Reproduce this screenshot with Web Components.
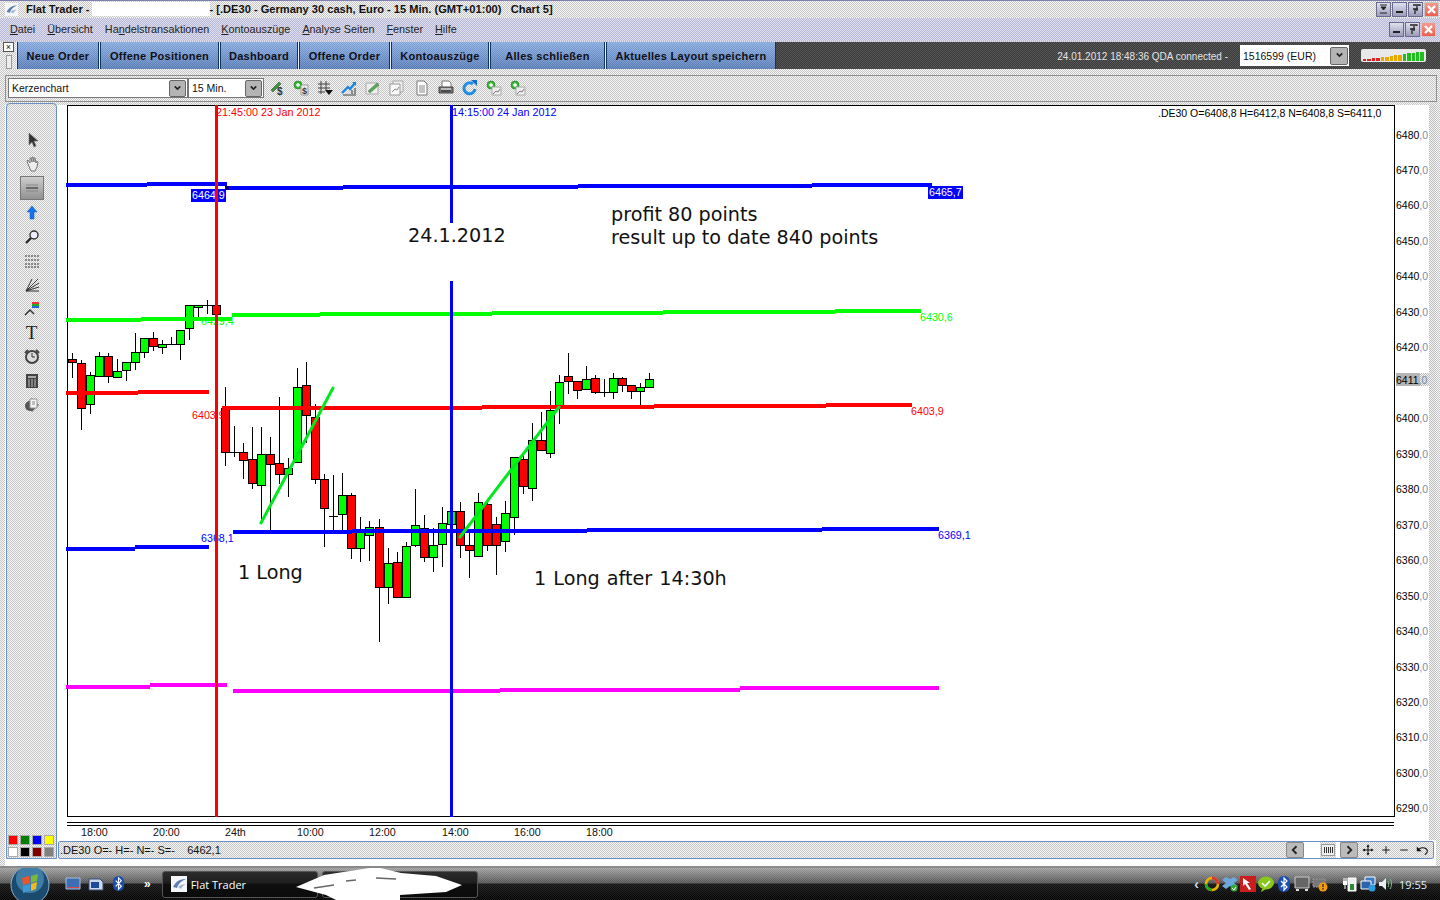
<!DOCTYPE html>
<html>
<head>
<meta charset="utf-8">
<title>Flat Trader</title>
<style>
  html, body { margin: 0; padding: 0; overflow: hidden; background: #fff; }
</style>
</head>
<body>
<app-shell>
  <title-bar></title-bar>
  <menu-bar></menu-bar>
  <tab-bar>
    <tab-button style="width:82px">Neue Order</tab-button>
    <tab-button style="width:119px">Offene Positionen</tab-button>
    <tab-button style="width:78px">Dashboard</tab-button>
    <tab-button style="width:91px">Offene Order</tab-button>
    <tab-button style="width:98px">Kontoauszüge</tab-button>
    <tab-button style="width:115px">Alles schließen</tab-button>
    <tab-button style="width:170px">Aktuelles Layout speichern</tab-button>
  </tab-bar>
  <chart-toolbar></chart-toolbar>
  <main-area>
    <tool-rail></tool-rail>
    <chart-column>
      <candle-chart></candle-chart>
      <status-strip></status-strip>
    </chart-column>
  </main-area>
  <task-bar></task-bar>
</app-shell>

<script>
/**
 * Flat Trader chart window, built from small custom elements.
 */
const DITHER_GREY = 'repeating-conic-gradient(#c6c6c6 0 25%, #f6f6f6 0 50%) 0 0 / 2px 2px'
const DITHER_LILAC = 'repeating-conic-gradient(#b9b9d8 0 25%, #dcdcec 0 50%) 0 0 / 2px 2px'

/**
 * Icon drawings, all on a 16x16 grid.
 */
const ICONS = {
  cursor: '<path d="M5 1v12l3-3 2 5 2-1-2-5h4z" fill="#333" stroke="#777" stroke-width=".6"/>',
  hand: '<path d="M4 8 3 5l1-1 2 3V2h1l1 4V1h1l1 5V2h1l1 5 1-2 1 1-1 5-2 4H7z" fill="#eee" stroke="#777"/>',
  line: '<path d="M2 8h12" stroke="#222"/><path d="M2 5h12M2 11h12" stroke="#888"/>',
  up: '<path d="M8 1 3 7h3v7h4V7h3z" fill="#1874ea" stroke="#0c56c0" stroke-width=".5"/>',
  zoom: '<circle cx="10" cy="6" r="4" fill="#eef" stroke="#333" stroke-width="1.4"/><path d="M7 9l-5 5" stroke="#222" stroke-width="2.2"/>',
  dashes: '<path d="M1 3h14M1 7h14M1 11h14M1 14h14" stroke="#333" stroke-dasharray="2 1"/>',
  fan: '<path d="M2 14 14 2M2 14 15 6M2 14 15 10M2 14h13M2 14 8 2" stroke="#333"/>',
  multi: '<path d="M8 1h7v2H8z" fill="#e33"/><path d="M8 3h7v2H8z" fill="#2a2"/><path d="M8 5h7v2H8z" fill="#26d"/><path d="M1 14l5-5 4 4" fill="none" stroke="#333" stroke-width="1.5"/>',
  clock: '<circle cx="8" cy="8" r="6" fill="#ddd" stroke="#444" stroke-width="2"/><path d="M8 4v4h3" fill="none" stroke="#333"/><path d="M1 4l3-3M15 4l-3-3" stroke="#444" stroke-width="2"/>',
  calc: '<path d="M2 1h12v14H2z" fill="#444"/><path d="M4 3h8v2H4z" fill="#aaa"/><path d="M4 7h8M4 9h8M4 11h8M4 13h8" stroke="#bbb" stroke-dasharray="2 1"/>',
  print: '<path d="M4 1h7l2 2v5H4z" fill="#fff" stroke="#777"/><path d="M1 7h14v6H1z" fill="#777" stroke="#444"/><path d="M3 9h10" stroke="#fff"/><path d="M3 11h10" stroke="#222"/>',
  orbdoc: '<path d="M8 1l7 7-7 7-7-7z" fill="#777"/><circle cx="6" cy="9" r="5" fill="#555"/><path d="M6 2h7v9H6z" fill="#f2f2f2" stroke="#999"/><path d="M8 5h3M8 7h3" stroke="#888"/>',
  pencilbuck: '<path d="M2 10 10 2l2 2-8 8z" fill="#3a9a3a" stroke="#444" stroke-width=".6"/><text x="8" y="15" font-size="10" font-family="Liberation Sans" font-weight="bold" fill="#333">$</text>',
  plusbuck: '<circle cx="5" cy="5" r="4" fill="#2fb52f" stroke="#197a19" stroke-width=".6"/><path d="M5 3v4M3 5h4" stroke="#fff" stroke-width="1.4"/><path d="M8 5h7v10H8z" fill="#eee" stroke="#999"/><text x="9" y="14" font-size="9" font-family="Liberation Sans" font-weight="bold" fill="#333">$</text>',
  grid: '<path d="M1 4h12M1 8h12M1 12h7M4 1v13M9 1v9" stroke="#444"/><path d="M8 10h8l-4 5z" fill="#111"/>',
  trend: '<path d="M1 13 7 7l2 2 5-6" fill="none" stroke="#1c84dc" stroke-width="2.2"/><path d="M11 2h4v4z" fill="#1c84dc"/><path d="M2 15h13" stroke="#777" stroke-width="1.5"/><path d="M11 10v4M14 8v6" stroke="#888" stroke-width="2"/>',
  pencheck: '<path d="M1 3h12v11H1z" fill="#eee" stroke="#aaa"/><path d="M3 11 12 3l2 2-9 8z" fill="#4cae4c" stroke="#666" stroke-width=".5"/>',
  chartdoc: '<path d="M4 1h10v11H4z" fill="#eee" stroke="#aaa"/><path d="M1 4h10v11H1z" fill="#fafafa" stroke="#999"/><path d="M3 12l3-3 2 1 2-3" fill="none" stroke="#888"/>',
  doc: '<path d="M3 1h7l3 3v11H3z" fill="#fff" stroke="#777"/><path d="M5 6h6M5 8h6M5 10h6M5 12h6" stroke="#888"/>',
  refresh: '<path d="M13 9a5.5 5.5 0 1 1-2-5" fill="none" stroke="#1e8ee8" stroke-width="3"/><path d="M9 0h6v6z" fill="#1468c8"/>',
  pluschart: '<circle cx="5" cy="5" r="4" fill="#3bb43b" stroke="#197a19" stroke-width=".6"/><path d="M5 3v4M3 5h4" stroke="#fff" stroke-width="1.3"/><path d="M6 7h9v8H6z" fill="#eee" stroke="#aaa"/><path d="M7 14l3-3 2 1 2-3" fill="none" stroke="#777"/>',
  chevron: '<path d="M4 5l4 4 4-4" fill="none" stroke="#222" stroke-width="2.4"/>',
  left: '<path d="M10 3 5 8l5 5" fill="none" stroke="#222" stroke-width="2.4"/>',
  right: '<path d="M6 3l5 5-5 5" fill="none" stroke="#222" stroke-width="2.4"/>',
  bars: '<path d="M1.5 2.5h13v11h-13z" fill="#eee" stroke="#999"/><path d="M4.5 5v6M6.5 5v6M8.5 5v6M10.5 5v6M12.5 5v6" stroke="#333"/>',
  move: '<path d="M8 1v14M1 8h14" stroke="#111" stroke-width="1.4"/><path d="M8 1l-2 3h4zM8 15l-2-3h4zM1 8l3-2v4zM15 8l-3-2v4z" fill="#111"/>',
  plus: '<path d="M8 3v10M3 8h10" stroke="#111" stroke-width="1.3"/>',
  minus: '<path d="M3 8h10" stroke="#111" stroke-width="1.3"/>',
  undo: '<path d="M1 3v6h6z" fill="#111"/><path d="M4 6c4-3 10-1 10 3 0 2-2 3-3 4" fill="none" stroke="#111" stroke-width="1.3"/>',
  swoosh: '<path d="M0 0h16v16H0z" fill="#f4f6fa"/><path d="M2 11C5 5 9 3 15 3 10 5 7 8 6 12z" fill="#5b80b0"/><path d="M7 11c2-2 5-3 8-3-3 1-4 3-5 5z" fill="#9db4d2"/>',
  gear: '<path d="M1 3h11l3 3v8H1z" fill="#cfd8ea" stroke="#34507f"/><path d="M3 6h8v6H3z" fill="#1d4d9a"/>',
  desktop: '<path d="M1 2h14v11H1z" fill="#3d6db3" stroke="#a9c0dc"/><path d="M2 11h12v1H2z" fill="#d44"/>',
  bluetooth: '<path d="M8 0c5 0 6 4 6 8s-1 8-6 8-6-4-6-8 1-8 6-8z" fill="#1a4fb0"/><path d="M5 5l6 6-3 3V2l3 3-6 6" fill="none" stroke="#fff" stroke-width="1.2"/>',
  ring: '<circle cx="8" cy="8" r="6" fill="none" stroke="#e8b400" stroke-width="2.6"/><path d="M8 2a6 6 0 0 1 6 6" fill="none" stroke="#d33" stroke-width="2.6"/><path d="M2 8a6 6 0 0 0 6 6" fill="none" stroke="#2a2" stroke-width="2.6"/>',
  box: '<path d="M8 3l-4-2-4 3 4 3-4 3 4 3 4-3 4 3 4-3-4-3 4-3-4-3z" fill="#6ca8dc"/><circle cx="12" cy="12" r="3.5" fill="#3a3"/><path d="M10 12l2 2 2-3" fill="none" stroke="#fff"/>',
  redapp: '<path d="M0 0h16v16H0z" fill="#c81e1e"/><path d="M3 2v8l2-2 4 6 2-1-4-6h3z" fill="#fff"/>',
  bubble: '<ellipse cx="8" cy="7" rx="8" ry="6.5" fill="#88c81e"/><path d="M4 13l-1 3 5-3z" fill="#88c81e"/><path d="M4 7l3 3 5-5" fill="none" stroke="#fff" stroke-width="1.6"/>',
  monitor: '<path d="M1 1h14v11H1z" fill="#666" stroke="#ccc"/><path d="M2 13h3v2H2zM11 13h3v2h-3z" fill="#ddd"/>',
  warn: '<path d="M1 3h12v8H1z" fill="#777" stroke="#999" stroke-dasharray="2 1"/><circle cx="11" cy="11" r="4.5" fill="#f29a11"/><path d="M11 8v3M11 12v1.4" stroke="#222" stroke-width="1.2"/>',
  power: '<path d="M6 2h8v13H6z" fill="#eee" stroke="#fff"/><path d="M8 8h4v6H8z" fill="#2a8a3a"/><path d="M1 5h4v4H1z" fill="#fff"/><path d="M2 2v3M4 2v3M3 9v4" stroke="#fff"/>',
  network: '<path d="M5 1h10v8H5z" fill="#3c7ac8" stroke="#fff"/><path d="M1 5h10v8H1z" fill="#2d62ad" stroke="#fff"/><circle cx="12" cy="12" r="3.5" fill="#2aa0e0"/>',
  sound: '<path d="M1 6h3l4-4v12l-4-4H1z" fill="#e8eef6"/><path d="M10 5c1 2 1 4 0 6M12 3c2 3 2 7 0 10" fill="none" stroke="#7cc88a"/>'
}

/**
 * Registers a custom element whose shadow root holds the given markup.
 *
 * @param {string} name - The tag name.
 * @param {string} html - Shadow markup with its style.
 * @param {Function} [ready] - Called with the element after it is built.
 */
function defineElement (name, html, ready) {
  const template = document.createElement('template')
  template.innerHTML = html
  customElements.define(name, class extends HTMLElement {
    constructor () {
      super()
      this.attachShadow({ mode: 'open' }).appendChild(template.content.cloneNode(true))
      if (ready) ready(this)
    }
  })
}

// One inline svg icon, the name decides the drawing.
customElements.define('px-icon', class extends HTMLElement {
  constructor () {
    super()
    const size = this.getAttribute('size') || 16
    this.attachShadow({ mode: 'open' }).innerHTML = `
      <style>:host { display: block; width: ${size}px; height: ${size}px; } svg { display: block; }</style>
      <svg width="${size}" height="${size}" viewBox="0 0 16 16">${ICONS[this.getAttribute('name')] || ''}</svg>`
  }
})

defineElement('app-shell', `
  <style>
    :host {
      display: flex;
      flex-direction: column;
      width: 1440px;
      height: 900px;
      overflow: hidden;
      font-family: "Liberation Sans", Arial, sans-serif;
      font-size: 11px;
      color: #111;
    }
  </style>
  <slot></slot>`)

// Square caption button, the top two rows carry three or four of them.
defineElement('window-button', `
  <style>
    :host {
      display: flex;
      align-items: center;
      justify-content: center;
      width: 13px;
      height: 13px;
      border: 1px solid #6a6a8c;
      background: linear-gradient(#dfe0ee, #9c9cba);
      color: #222;
      box-sizing: content-box;
    }
    :host([kind="close"]) { background: linear-gradient(#f49a90, #ee5d50); border-color: #c9c9c9; }
    svg { display: block; }
  </style>
  <svg width="11" height="11" viewBox="0 0 11 11"></svg>`, el => {
  const marks = {
    down: '<path d="M2 1h7M2 9h7M3 3l2.5 3L8 3z" stroke="#222" fill="#222"/>',
    min: '<path d="M2 8h7" stroke="#222" stroke-width="2"/>',
    restore: '<path d="M3 1h7v1M7 2v5M3 5h5M5 5v5" stroke="#222" fill="none" stroke-width="1.3"/>',
    close: '<path d="M2 2l7 7M9 2l-7 7" stroke="#fff" stroke-width="2.4"/>'
  }
  el.shadowRoot.querySelector('svg').innerHTML = marks[el.getAttribute('kind')]
})

defineElement('title-bar', `
  <style>
    :host {
      display: flex;
      align-items: center;
      height: 17px;
      border-top: 1px solid #8080b0;
      background: ${DITHER_GREY};
      font-weight: bold;
      font-size: 11.1px;
      white-space: nowrap;
    }
    .logo { margin-left: 5px; }
    .name { margin-left: 8px; }
    .hidden { width: 118px; height: 14px; margin-left: 2px; background: #fff; }
    .doc { white-space: pre; }
    .controls { display: flex; gap: 1px; margin-left: auto; margin-right: 1px; }
  </style>
  <px-icon class="logo" name="swoosh" size="13"></px-icon>
  <span class="name">Flat Trader -</span>
  <span class="hidden"></span>
  <span class="doc">- [.DE30 - Germany 30 cash, Euro - 15 Min. (GMT+01:00)   Chart 5]</span>
  <span class="controls">
    <window-button kind="down"></window-button>
    <window-button kind="min"></window-button>
    <window-button kind="restore"></window-button>
    <window-button kind="close"></window-button>
  </span>`)

defineElement('menu-bar', `
  <style>
    :host {
      display: flex;
      align-items: center;
      gap: 12px;
      height: 23px;
      padding-left: 10px;
      background: ${DITHER_LILAC};
      font-size: 10.8px;
      color: #222;
    }
    .controls { display: flex; gap: 1px; margin-left: auto; margin-right: 4px; }
  </style>
  <span><u>D</u>atei</span>
  <span><u>Ü</u>bersicht</span>
  <span>Ha<u>n</u>delstransaktionen</span>
  <span><u>K</u>ontoauszüge</span>
  <span><u>A</u>nalyse Seiten</span>
  <span><u>F</u>enster</span>
  <span><u>H</u>ilfe</span>
  <span class="controls">
    <window-button kind="min"></window-button>
    <window-button kind="restore"></window-button>
    <window-button kind="close"></window-button>
  </span>`)

defineElement('tab-button', `
  <style>
    :host {
      display: flex;
      align-items: center;
      justify-content: center;
      box-sizing: border-box;
      height: 27px;
      border-left: 1px solid #0f3560;
      border-right: 1px solid #0f3560;
      box-shadow: -1px 0 0 #e8eef8;
      background: repeating-conic-gradient(rgba(255,255,255,.12) 0 25%, rgba(0,0,0,.08) 0 50%) 0 0 / 2px 2px,
        linear-gradient(#8db1e8, #5e83bf);
      font-weight: bold;
      font-size: 11px;
      letter-spacing: .3px;
      color: #101018;
      white-space: nowrap;
    }
  </style>
  <slot></slot>`)

defineElement('tab-bar', `
  <style>
    :host {
      display: flex;
      align-items: flex-end;
      height: 29px;
      background: ${DITHER_LILAC};
    }
    .grip {
      display: flex;
      flex-direction: column;
      align-items: center;
      gap: 3px;
      width: 17px;
      height: 27px;
      box-sizing: border-box;
      background: ${DITHER_GREY};
    }
    .x {
      width: 9px;
      height: 9px;
      border: 1px solid #555;
      background: #fff;
      font-size: 9px;
      line-height: 8px;
      text-align: center;
    }
    .lines { width: 4px; height: 14px; border: 1px solid #999; background: #eee; }
    .tabs { display: flex; gap: 1px; }
    .info {
      display: flex;
      flex: 1;
      align-items: center;
      height: 27px;
      background: repeating-conic-gradient(#3c3c3c 0 25%, #565656 0 50%) 0 0 / 2px 2px;
    }
    .clock { margin-left: auto; padding-top: 1px; font-size: 10px; color: #e4e4e4; white-space: nowrap; }
    .account {
      display: flex;
      align-items: center;
      justify-content: space-between;
      box-sizing: border-box;
      width: 109px;
      height: 21px;
      margin-left: 12px;
      padding: 0 1px 0 3px;
      background: #fff;
      font-size: 10.5px;
    }
    .drop {
      display: flex;
      align-items: center;
      justify-content: center;
      width: 16px;
      height: 16px;
      border: 1px solid #666;
      border-radius: 2px;
      background: #b4b4b4;
    }
    .meter {
      display: flex;
      align-items: flex-end;
      gap: 1px;
      box-sizing: border-box;
      width: 65px;
      height: 13px;
      margin: 0 14px 0 12px;
      padding: 1px 2px;
      border-radius: 2px;
      background: #e9e9e9;
    }
    .meter i { display: block; width: 4px; }
  </style>
  <div class="grip"><div class="x">×</div><div class="lines"></div></div>
  <div class="tabs"><slot></slot></div>
  <div class="info">
    <span class="clock">24.01.2012 18:48:36 QDA connected -</span>
    <span class="account">1516599 (EUR)<span class="drop"><px-icon name="chevron" size="11"></px-icon></span></span>
    <span class="meter"></span>
  </div>`, el => {
  const heights = [2, 2, 3, 3, 4, 4, 5, 6, 6, 7, 8, 8, 9, 9]
  const colors = ['#d22', '#d22', '#d22', '#d22', '#e8a800', '#e8a800', '#e8a800', '#e8a800', '#e8a800', '#1fbf1f', '#1fbf1f', '#1fbf1f', '#1fbf1f', '#1fbf1f']
  el.shadowRoot.querySelector('.meter').innerHTML = heights.map((h, i) =>
    `<i style="height:${h}px;background:${colors[i]}"></i>`).join('')
})

defineElement('chart-toolbar', `
  <style>
    :host {
      display: block;
      box-sizing: border-box;
      height: 36px;
      padding: 6px 3px 0 5px;
      background: ${DITHER_GREY};
    }
    .band {
      display: flex;
      align-items: center;
      box-sizing: border-box;
      height: 27px;
      padding: 0 0 1px 2px;
      border: 1px solid #909090;
    }
    .select {
      display: flex;
      align-items: center;
      justify-content: space-between;
      box-sizing: border-box;
      height: 20px;
      padding: 0 1px 0 3px;
      border: 1px solid #777;
      background: #fff;
      font-size: 10.5px;
    }
    .drop {
      display: flex;
      align-items: center;
      justify-content: center;
      width: 15px;
      height: 15px;
      border: 1px solid #666;
      border-radius: 2px;
      background: #b4b4b4;
    }
    .icons { display: flex; gap: 8.1px; margin-left: 5px; }
  </style>
  <div class="band">
    <span class="select" style="width:180px">Kerzenchart<span class="drop"><px-icon name="chevron" size="11"></px-icon></span></span>
    <span class="select" style="width:76px">15 Min.<span class="drop"><px-icon name="chevron" size="11"></px-icon></span></span>
    <span class="icons">
      <px-icon name="pencilbuck"></px-icon><px-icon name="plusbuck"></px-icon><px-icon name="grid"></px-icon>
      <px-icon name="trend"></px-icon><px-icon name="pencheck"></px-icon><px-icon name="chartdoc"></px-icon>
      <px-icon name="doc"></px-icon><px-icon name="print"></px-icon><px-icon name="refresh"></px-icon>
      <px-icon name="pluschart"></px-icon><px-icon name="pluschart"></px-icon>
    </span>
  </div>`)

defineElement('main-area', `
  <style>
    :host {
      display: flex;
      height: 763px;
      box-sizing: border-box;
      padding: 0 4px 7px 5px;
      background: linear-gradient(#fff, #fff) 5px 0 / calc(100% - 9px) 100% no-repeat, ${DITHER_GREY};
      border-bottom: 2px solid #8a8a8a;
    }
  </style>
  <slot></slot>`)

defineElement('tool-rail', `
  <style>
    :host {
      display: flex;
      flex-direction: column;
      align-items: center;
      flex: none;
      box-sizing: border-box;
      width: 51px;
      margin: -2px 0 0 1px;
      padding-top: 24px;
      border: 1px solid #6a90c4;
      border-radius: 4px 4px 0 0;
      background: ${DITHER_GREY};
    }
    .slot {
      display: flex;
      align-items: center;
      justify-content: center;
      width: 24px;
      height: 24px;
      font-family: "Liberation Serif", serif;
      font-size: 19px;
      line-height: 24px;
      color: #222;
    }
    .on { background: linear-gradient(#cfcfcf, #8f8f8f); outline: 1px solid #777; outline-offset: -1px; }
    .swatches {
      display: grid;
      grid-template-columns: repeat(4, 10px);
      grid-auto-rows: 10px;
      gap: 2px;
      margin: auto 2px 0 0;
      padding-bottom: 1px;
    }
    .swatches i { display: block; border: 1px solid #aaa; box-sizing: border-box; }
  </style>
  <div class="slot"><px-icon name="cursor"></px-icon></div>
  <div class="slot"><px-icon name="hand"></px-icon></div>
  <div class="slot on"><px-icon name="line"></px-icon></div>
  <div class="slot" style="margin-top:1px"><px-icon name="up"></px-icon></div>
  <div class="slot"><px-icon name="zoom"></px-icon></div>
  <div class="slot"><px-icon name="dashes"></px-icon></div>
  <div class="slot"><px-icon name="fan"></px-icon></div>
  <div class="slot"><px-icon name="multi"></px-icon></div>
  <div class="slot">T</div>
  <div class="slot"><px-icon name="clock"></px-icon></div>
  <div class="slot"><px-icon name="calc"></px-icon></div>
  <div class="slot"><px-icon name="orbdoc"></px-icon></div>
  <div class="swatches">
    <i style="background:#f00"></i><i style="background:#008000"></i><i style="background:#00f"></i><i style="background:#ff0"></i>
    <i style="background:#fff"></i><i style="background:#000"></i><i style="background:#800000"></i><i style="background:#808080"></i>
  </div>`)

defineElement('chart-column', `
  <style>
    :host { display: flex; flex-direction: column; flex: 1; min-width: 0; }
  </style>
  <slot></slot>`)

/**
 * The candles, read off the reference: body top, body bottom, wick top, wick bottom, colour.
 * Values are thirds of a pixel counted from y = 290. Colour d is a flat candle.
 */
const CANDLES = [
  [208, 217, 190, 263, 'r'], [220, 355, 210, 420, 'r'], [256, 343, 247, 372, 'g'], [199, 257, 186, 260, 'g'],
  [199, 259, 190, 278, 'r'], [244, 260, 208, 260, 'g'], [217, 241, 217, 273, 'g'], [187, 217, 129, 240, 'g'],
  [145, 187, 145, 203, 'g'], [145, 169, 126, 183, 'r'], [163, 172, 150, 192, 'g'], [163, 163, 141, 163, 'd'],
  [121, 163, 121, 210, 'g'], [46, 115, 46, 150, 'g'], [46, 52, 46, 82, 'g'], [44, 44, 30, 72, 'd'],
  [46, 73, 46, 73, 'r'], [355, 487, 292, 527, 'r'], [485, 485, 408, 500, 'd'], [487, 511, 460, 566, 'r'],
  [508, 580, 412, 596, 'r'], [493, 586, 412, 690, 'g'], [493, 523, 441, 733, 'r'], [520, 553, 322, 583, 'r'],
  [535, 553, 505, 620, 'g'], [292, 517, 235, 517, 'g'], [286, 376, 217, 460, 'r'], [382, 568, 343, 583, 'r'],
  [568, 655, 553, 770, 'r'], [677, 677, 555, 720, 'd'], [616, 673, 550, 720, 'g'], [616, 775, 610, 808, 'r'],
  [722, 775, 682, 815, 'g'], [712, 735, 692, 813, 'g'], [712, 892, 688, 1055, 'r'], [820, 892, 775, 942, 'g'],
  [817, 922, 787, 922, 'r'], [769, 922, 755, 925, 'g'], [706, 766, 598, 772, 'g'], [715, 802, 676, 815, 'r'],
  [766, 802, 715, 845, 'g'], [700, 763, 652, 830, 'g'], [664, 703, 650, 760, 'g'], [664, 766, 637, 804, 'r'],
  [766, 781, 730, 863, 'r'], [637, 799, 610, 802, 'g'], [643, 766, 630, 782, 'r'], [703, 766, 680, 856, 'r'],
  [670, 754, 634, 786, 'g'], [502, 682, 502, 736, 'g'], [508, 588, 490, 612, 'r'], [451, 595, 400, 632, 'g'],
  [451, 481, 366, 481, 'r'], [361, 490, 303, 503, 'g'], [277, 346, 256, 403, 'g'], [259, 274, 190, 312, 'r'],
  [274, 301, 274, 328, 'r'], [268, 298, 229, 298, 'g'], [265, 307, 256, 313, 'r'], [307, 307, 268, 322, 'd'],
  [265, 307, 250, 326, 'g'], [265, 286, 262, 307, 'r'], [286, 304, 286, 326, 'r'], [292, 304, 280, 344, 'g'],
  [268, 292, 250, 292, 'g']
]

// Hand-drawn level lines: x from, x to, y.
const LEVELS = {
  '#0000ff': [[66, 147, 185], [147, 227, 184], [228, 343, 188], [343, 578, 187], [578, 812, 186], [812, 932, 185],
    [66, 135, 549], [135, 209, 547], [233, 352, 532], [352, 587, 531], [587, 822, 530], [822, 939, 529]],
  '#00ff00': [[66, 141, 320], [141, 232, 319], [232, 320, 315], [320, 492, 314], [492, 663, 313], [663, 835, 312], [835, 921, 311]],
  '#ff0000': [[66, 138, 393], [138, 209, 392], [222, 482, 408], [482, 654, 407], [654, 826, 406], [826, 912, 405]],
  '#ff00ff': [[66, 150, 687], [150, 227, 685], [233, 500, 691], [500, 740, 690], [740, 939, 688]]
}

// Vertical middle of every price label, 6410,0 sits hidden under the current price.
const PRICE_ROWS = [135, 170, 205, 241, 276, 312, 347, null, 418, 454, 489, 525, 560, 596, 631, 667, 702, 737, 773, 808]

const chartFont = '"Liberation Sans", Arial, sans-serif'

/**
 * Builds the svg content of the chart. Coordinates are those of the page.
 *
 * @returns {string} The svg markup.
 */
function chartMarkup () {
  let out = ''
  const text = (x, y, s, fill, extra = '') => `<text x="${x}" y="${y}" fill="${fill}" ${extra}>${s}</text>`

  // Frame and the free column right of the price axis.
  out += '<rect x="1429" y="105" width="7" height="735" fill="url(#dither)"/>'
  out += '<rect x="67.5" y="105.5" width="1327" height="711" fill="#fff" stroke="#000"/>'
  out += '<path d="M67 822.5h1327M67 825.5h1327" stroke="#000" fill="none"/>'

  // Candles.
  CANDLES.forEach((c, i) => {
    const cx = Math.round(72 + 9.015 * i) + 0.5
    const y = v => Math.round(290 + v / 3)
    out += `<path d="M${cx} ${y(c[2])}V${y(c[3])}" stroke="#000"/>`
    if (c[4] === 'd') {
      out += `<rect x="${cx - 4.5}" y="${y(c[0])}" width="9" height="1" fill="#000"/>`
    } else {
      const top = y(c[0])
      out += `<rect x="${cx - 4}" y="${top + 0.5}" width="8" height="${Math.max(y(c[1]) - top, 1)}" fill="${c[4] === 'g' ? '#00ff00' : '#ff0000'}" stroke="#000"/>`
    }
  })

  // Level labels, they lie under the drawn lines.
  out += '<g font-size="10.7">'
  out += '<rect x="191" y="189" width="35" height="13" fill="#0000ff"/><rect x="928" y="186" width="35" height="13" fill="#0000ff"/>'
  out += text(192, 199, '6464,9', '#fff') + text(929, 196, '6465,7', '#fff')
  out += text(201, 325, '6429,4', '#00ff00') + text(920, 321, '6430,6', '#00ff00')
  out += text(192, 419, '6403,9', '#ff0000') + text(911, 415, '6403,9', '#ff0000')
  out += text(201, 542, '6368,1', '#0000ff') + text(938, 539, '6369,1', '#0000ff')
  out += '</g><g font-size="10.8">'
  out += text(216, 116, '21:45:00 23 Jan 2012', '#ff0000') + text(452, 116, '14:15:00 24 Jan 2012', '#0000ff')
  out += '</g><g font-size="10.5">'
  out += text(1158, 117, '.DE30 O=6408,8 H=6412,8 N=6408,8 S=6411,0', '#000')
  out += '</g>'

  // Level lines and trend strokes.
  for (const color in LEVELS) {
    for (const [a, b, y] of LEVELS[color]) {
      out += `<rect x="${a}" y="${y - 2}" width="${b - a}" height="4" rx="1.5" fill="${color}"/>`
    }
  }
  out += '<rect x="225" y="186" width="4" height="4" fill="#000080"/>'
  out += '<path d="M261 523 333 388M460 537 559 407" stroke="#00e81e" stroke-width="3" stroke-linecap="round" fill="none" shape-rendering="auto"/>'
  out += '<rect x="215" y="105" width="3" height="712" fill="#ff0000"/>'
  out += '<rect x="450" y="105" width="3" height="118" fill="#0000ff"/><rect x="450" y="281" width="3" height="536" fill="#0000ff"/>'

  // Price axis.
  out += '<g font-size="10.5">'
  PRICE_ROWS.forEach((mid, i) => {
    if (mid === null) return
    out += `<text x="1396" y="${mid + 4}" fill="#000">${6480 - i * 10}<tspan fill="#7d8ea8">,0</tspan></text>`
  })
  out += '<rect x="1396" y="373" width="24" height="13" fill="#b5b5b5"/>'
  out += '<rect x="1420" y="373" width="9" height="13" fill="url(#dither)"/>'
  out += '<text x="1396" y="384" fill="#000">6411<tspan fill="#7d8ea8">,0</tspan></text>'
  out += '</g><g font-size="10.7">'

  // Time axis.
  const times = [[81, '18:00'], [153, '20:00'], [225, '24th'], [297, '10:00'], [369, '12:00'], [442, '14:00'], [514, '16:00'], [586, '18:00']]
  for (const [x, s] of times) out += text(x, 836, s, '#111')
  out += '</g>'

  // Notes written on the chart.
  out += '<g font-family="\'DejaVu Sans\', sans-serif" font-size="19.2" fill="#111">'
  out += text(408, 242, '24.1.2012', '#111') + text(611, 221, 'profit 80 points', '#111')
  out += text(611, 244, 'result up to date 840 points', '#111')
  out += text(238, 579, '1 Long', '#111') + text(534, 585, '1 Long after 14:30h', '#111', 'word-spacing="1"')
  out += '</g>'
  return out
}

defineElement('candle-chart', `
  <style>
    :host { display: block; height: 736px; flex: none; }
    svg { display: block; font-family: ${chartFont.replace(/"/g, "'")}; }
  </style>
  <svg width="1379" height="736" viewBox="57 105 1379 736" shape-rendering="crispEdges" text-rendering="optimizeLegibility"></svg>`, el => {
  el.shadowRoot.querySelector('svg').innerHTML = `
    <defs><pattern id="dither" width="2" height="2" patternUnits="userSpaceOnUse">
      <rect width="2" height="2" fill="#f4f4f4"/><rect width="1" height="1" fill="#bcbcbc"/><rect x="1" y="1" width="1" height="1" fill="#bcbcbc"/>
    </pattern></defs>` + chartMarkup()
})

defineElement('status-strip', `
  <style>
    :host {
      display: flex;
      align-items: center;
      flex: none;
      box-sizing: border-box;
      height: 18px;
      margin: 0 2px 0 1px;
      padding-left: 1px;
      border: 1px solid #6a90c4;
      border-radius: 2px;
      background: ${DITHER_GREY};
      font-size: 11px;
    }
    .quote { white-space: pre; }
    .nav { display: flex; align-items: center; margin-left: auto; margin-right: 2px; }
    .press { display: flex; align-items: center; justify-content: center; box-sizing: border-box; width: 18px; height: 16px; border: 1px solid #888; background: #bbb; border-radius: 2px; }
    .gap { width: 16px; height: 16px; background: #fff; }
    .plain { display: flex; justify-content: center; width: 18px; }
  </style>
  <span class="quote">.DE30 O=- H=- N=- S=-    6462,1</span>
  <span class="nav">
    <span class="press"><px-icon name="left" size="12"></px-icon></span>
    <span class="gap"></span>
    <px-icon name="bars" size="16"></px-icon>
    <span class="gap" style="width:4px"></span>
    <span class="press"><px-icon name="right" size="12"></px-icon></span>
    <span class="plain" style="margin-left:1px"><px-icon name="move" size="12"></px-icon></span>
    <span class="plain"><px-icon name="plus" size="12"></px-icon></span>
    <span class="plain"><px-icon name="minus" size="12"></px-icon></span>
    <span class="plain"><px-icon name="undo" size="13"></px-icon></span>
  </span>`)

defineElement('task-bar', `
  <style>
    :host {
      display: flex;
      align-items: center;
      position: relative;
      height: 32px;
      overflow: hidden;
      background: repeating-conic-gradient(rgba(255,255,255,.07) 0 25%, rgba(0,0,0,.07) 0 50%) 0 0 / 2px 2px,
        linear-gradient(#a8a8a8 0, #5c5c5c 15px, #181818 16px, #060606 100%);
      color: #fff;
      font-size: 11px;
    }
    .orb { position: absolute; left: 10px; top: -3px; }
    .quick { display: flex; gap: 7px; margin-left: 65px; }
    .more { margin-left: 18px; font-size: 12px; font-weight: bold; }
    .button {
      display: flex;
      align-items: center;
      gap: 4px;
      box-sizing: border-box;
      width: 156px;
      height: 27px;
      margin-left: 4px;
      padding-left: 8px;
      border: 1px solid #555;
      border-radius: 3px;
      background: rgba(10, 10, 10, .75);
      font-family: "Open Sans", sans-serif;
    }
    .button.first { margin-left: 11px; }
    .blob { position: absolute; left: 296px; top: -1px; }
    .tray { display: flex; align-items: center; gap: 2px; margin-left: auto; }
    .tray .wide { margin-left: 12px; }
    .time { margin: 0 13px 0 3px; font-family: "Open Sans", sans-serif; color: #dff0ff; }
    .chev { margin-right: 3px; color: #cfd8ea; font-weight: bold; font-size: 14px; }
  </style>
  <svg class="orb" width="40" height="40" viewBox="0 0 40 40">
    <circle cx="20" cy="20" r="19" fill="#1a4a6e" stroke="#8fb4cc"/>
    <circle cx="20" cy="14" r="14" fill="#4f94bd" opacity=".7"/>
    <path d="M12 13l7-2 1 7-7 2z" fill="#e8572b"/><path d="M21 11l7-2-1 7-6 2z" fill="#7eb83a"/>
    <path d="M13 21l7-2 0 7-7 2z" fill="#3a9ad9"/><path d="M21 19l6-2-1 7-5 2z" fill="#f2b91e"/>
  </svg>
  <span class="quick">
    <px-icon name="desktop" size="16"></px-icon><px-icon name="gear" size="16"></px-icon><px-icon name="bluetooth" size="15"></px-icon>
  </span>
  <span class="more">»</span>
  <span class="button first"><px-icon name="swoosh" size="16"></px-icon>Flat Trader</span>
  <span class="button"></span>
  <svg class="blob" width="170" height="34" viewBox="0 0 170 34">
    <path d="M0 20 28 8 80 0 105 6 140 9 166 18 150 25 104 28 104 34H42L30 28z" fill="#fff"/>
    <path d="M18 21 38 18 M50 14 60 13 M80 11 100 12" stroke="#666" stroke-width="1.5"/>
  </svg>
  <span class="tray">
    <span class="chev">‹</span>
    <px-icon name="ring"></px-icon><px-icon name="box"></px-icon><px-icon name="redapp"></px-icon><px-icon name="bubble"></px-icon>
    <px-icon name="bluetooth"></px-icon><px-icon name="monitor"></px-icon><px-icon name="warn"></px-icon>
    <px-icon class="wide" name="power"></px-icon><px-icon name="network"></px-icon><px-icon name="sound"></px-icon>
    <span class="time">19:55</span>
  </span>`)
</script>
</body>
</html>
